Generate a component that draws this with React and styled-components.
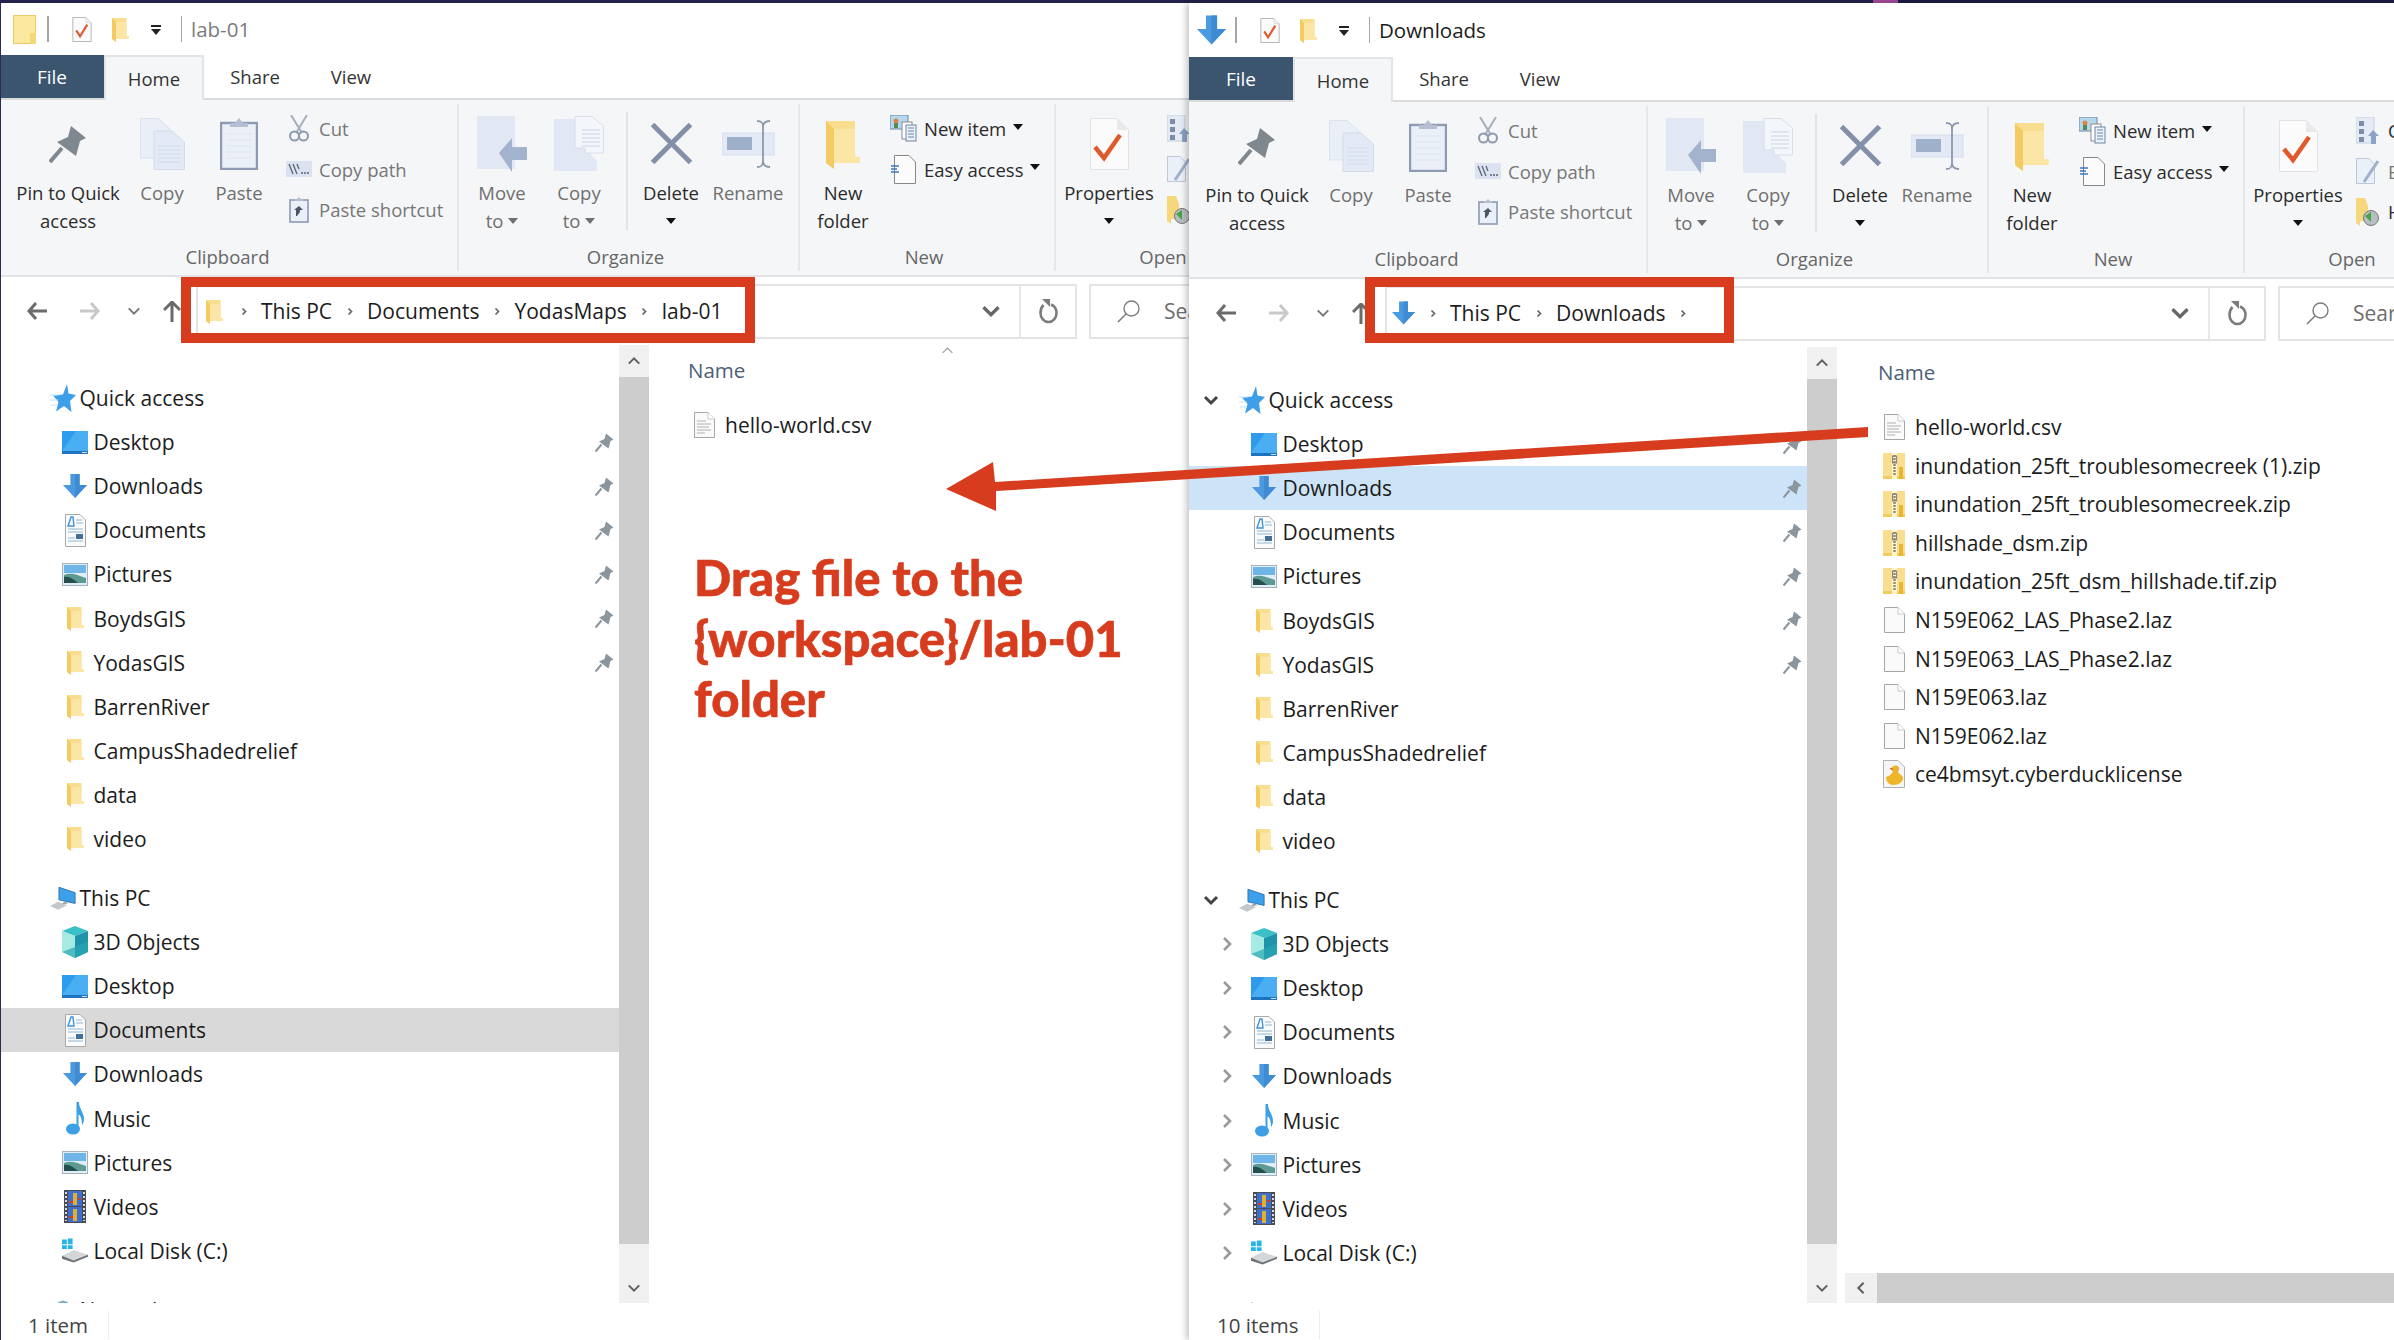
import React from "react";
import styled, { createGlobalStyle } from "styled-components";

const GlobalStyle = createGlobalStyle`
  html, body { margin: 0; padding: 0; background: #fff; }
  body { font-family: "Open Sans", "Noto Sans", sans-serif; color: #1c1c1c; }
  * { box-sizing: border-box; }
`;

const RED = "#d63c1d";

/* ---------- icons ---------- */
const Folder = ({ w = 17, h = 25 }) => (
  <svg width={w} height={h} viewBox="0 0 17 25">
    <path d="M0 1H14.5V19H17V22H4V25L0 22Z" fill="#f9de8f" />
    <path d="M4 5H14.5V19H17V22H4Z" fill="#fbe6a6" />
    <path d="M0 1L4 5V25L0 22Z" fill="#f3cb62" />
  </svg>
);
const TitleFolder = () => (
  <svg width="23" height="29" viewBox="0 0 23 29">
    <rect x="0.5" y="0.5" width="22" height="28" fill="#fcE89f" stroke="#eccb64" />
    <path d="M17 18H23V29H17Z" fill="#f5d777" />
  </svg>
);
const Arrow = ({ w = 26, h = 26 }) => (
  <svg width={w} height={h} viewBox="0 0 26 26">
    <path d="M8 0H18V12H26L13 26L0 12H8Z" fill="#4b9ae0" />
    <path d="M13 0H18V12H26L13 26Z" fill="#3f8cd4" />
  </svg>
);
const DesktopIcon = () => (
  <svg width="26" height="23" viewBox="0 0 26 23">
    <rect width="26" height="23" fill="#2f9bec" />
    <path d="M14 0H26V20H0Z" fill="#4aaef2" />
    <rect y="20" width="26" height="3" fill="#1f74bd" />
    <rect x="20" y="21" width="5" height="1" fill="#cfe6f7" />
  </svg>
);
const DocumentsIcon = () => (
  <svg width="21" height="33" viewBox="0 0 21 33">
    <path d="M.5.5H15L20.5 6V32.5H.5Z" fill="#fbfbfb" stroke="#a9a9a9" />
    <path d="M3 12L6 3H8L9 12Z" fill="none" stroke="#3f94dc" strokeWidth="1.4" />
    <path d="M11 6H17M11 9H18M3 15H18M3 18H18M3 27H18M3 24H10" stroke="#8cb6d8" />
    <rect x="11" y="20" width="7" height="5" fill="#41709a" />
  </svg>
);
const PicturesIcon = () => (
  <svg width="26" height="23" viewBox="0 0 26 23">
    <rect x=".5" y=".5" width="25" height="22" fill="#dfeefa" stroke="#a8b1ba" />
    <path d="M2 2H24V10H2Z" fill="#6fb5e8" />
    <path d="M2 12C9 9 15 12 24 15V20H2Z" fill="#5d9a93" />
    <path d="M2 14C8 13 12 17 16 20H2Z" fill="#244f4c" />
  </svg>
);
const Star = () => (
  <svg width="26" height="28" viewBox="0 0 26 28">
    <path d="M17 0L18.5 9.5L26 11L20 17L21.5 28L14 22L6 27.5L8.5 18L3 11.5L13 10.5Z" fill="#3d9eea" />
    <path d="M0 11H9M0 16H8M1 21H8" stroke="#c4e2f7" strokeWidth="1.2" />
  </svg>
);
const ThisPc = () => (
  <svg width="29" height="25" viewBox="0 0 29 25">
    <path d="M10 0L28 6V18L10 14Z" fill="#3ca0ea" stroke="#2b6fa8" />
    <path d="M17 15L20 18L13 19Z" fill="#9aa3ab" />
    <path d="M0 21L9 16L19 20L9 25Z" fill="#c4c8cc" />
  </svg>
);
const Cube = () => (
  <svg width="26" height="32" viewBox="0 0 26 32">
    <path d="M13 0L26 5L13 10L0 5Z" fill="#3cc0c8" />
    <path d="M0 5L13 10V32L0 26Z" fill="#a5ebe3" />
    <path d="M13 10L26 5V26L13 32Z" fill="#1f93aa" />
    <path d="M13 21L26 15V26L13 32L0 26Z" fill="#29a6b0" opacity=".7" />
  </svg>
);
const Music = () => (
  <svg width="18" height="33" viewBox="0 0 18 33">
    <ellipse cx="7" cy="27" rx="7" ry="5.5" fill="#3d9fe6" />
    <path d="M10.5 0H13C13 7 18 10 18 17C18 20 17 22 16 23C16 16 14 13 12.5 12.5V27H10.5Z" fill="#3d9fe6" />
  </svg>
);
const Videos = () => (
  <svg width="22" height="33" viewBox="0 0 22 33">
    <rect width="22" height="33" fill="#4a4a55" />
    <rect x="4" y="1" width="14" height="15" fill="#3d6fd0" />
    <rect x="4" y="17" width="14" height="15" fill="#3d6fd0" />
    <path d="M11 3V15M11 19V31" stroke="#e2b12c" strokeWidth="4" />
    <path d="M5 12H9M14 9H17M5 27H9" stroke="#c9402f" strokeWidth="2" />
    <path d="M2 2V31M20 2V31" stroke="#d8d8d8" strokeWidth="2" strokeDasharray="2 2" />
  </svg>
);
const Disk = () => (
  <svg width="27" height="25" viewBox="0 0 27 25">
    <path d="M0 7H5V11H0ZM6 7H11V11H6ZM0 1H5V6H0ZM6 0L11 0V6H6Z" fill="#28b4e6" />
    <path d="M0 18L12 12L27 17L12 24Z" fill="#d4d7da" />
    <path d="M0 18V21L12 25L27 19V17L12 23Z" fill="#6e7276" />
  </svg>
);
const Globe = () => (
  <svg width="18" height="20" viewBox="0 0 18 20">
    <circle cx="9" cy="10" r="9" fill="#57b0d8" />
    <path d="M3 6H14L9 0Z" fill="#8da7b4" />
  </svg>
);
const PinIcon = ({ w = 19, h = 23, c = "#8b959e" }) => (
  <svg width={w} height={h} viewBox="0 0 38 38">
    <path d="M1 37L13 23" stroke={c} strokeWidth="4" />
    <path d="M22 1L37 13L31 16L27 31L8 17L19 12Z" fill={c} />
  </svg>
);
const FilePage = ({ lines }) => (
  <svg width="21" height="26" viewBox="0 0 21 26">
    <path d="M.5.5H14L20.5 7V25.5H.5Z" fill="#fafafa" stroke="#a6a6a6" />
    <path d="M14 .5V7H20.5" fill="#fff" stroke="#c8c8c8" />
    {lines && <path d="M3 9H12M3 12H17M3 15H15M3 18H17M3 21H11" stroke="#c9c9c9" strokeWidth="1.4" />}
  </svg>
);
const ZipFile = () => (
  <svg width="22" height="26" viewBox="0 0 22 26">
    <rect width="22" height="26" fill="#f9de8f" />
    <rect y="23" width="22" height="3" fill="#f3cb62" />
    <rect x="9" width="5" height="26" fill="#fff4cf" />
    <path d="M11.5 2V22" stroke="#8a8a7a" strokeWidth="2.4" strokeDasharray="2 1" />
    <rect x="9.6" y="3" width="4" height="7" fill="none" stroke="#7e7e7e" />
    <rect x="16" y="14" width="4" height="12" fill="#e9b632" />
  </svg>
);
const DuckFile = () => (
  <svg width="22" height="28" viewBox="0 0 22 28">
    <path d="M.5.5H15L21.5 7V27.5H.5Z" fill="#f6f6f6" stroke="#b0b0b0" />
    <circle cx="12.5" cy="9" r="3.6" fill="#e9b32c" />
    <path d="M3 17C6 16 8 15 9.5 12H15C15.5 14 20 15 20 18C20 22 16 25 10.5 25C5.5 25 3 21 3 17Z" fill="#efb52a" />
    <path d="M6.5 8.5L9.5 7.5V10.5Z" fill="#d9651f" />
  </svg>
);
const Check = ({ w = 20, h = 25 }) => (
  <svg width={w} height={h} viewBox="0 0 40 52">
    <path d="M1 1H28L39 12V51H1Z" fill="#fbfbfc" stroke="#9c9c9c" strokeWidth="1.5" />
    <path d="M28 1V12H39" fill="#eee" stroke="#ccc" />
    <path d="M8 28L16 40L31 16" fill="none" stroke="#e0592a" strokeWidth="4.5" />
  </svg>
);
const Properties = () => (
  <svg width="39" height="52" viewBox="0 0 39 52">
    <path d="M.5.5H27L38.5 12V51.5H.5Z" fill="#fbfbfc" stroke="#e2e2e6" />
    <path d="M27 .5V12H38.5" fill="#e9e9ec" />
    <path d="M5 29L14 40L30 17" fill="none" stroke="#e0592a" strokeWidth="4.5" />
  </svg>
);
const CopyPages = () => (
  <svg width="45" height="52" viewBox="0 0 45 52">
    <path d="M.5.5H18L30 11V40H.5Z" fill="#e9eef7" stroke="#dbe2ee" />
    <path d="M14 13H32L44.5 24V51.5H14Z" fill="#e4eaf5" stroke="#d3dbe9" />
    <path d="M18 28H40M18 32H40M18 36H40M18 40H40M18 44H40" stroke="#d2daea" />
  </svg>
);
const Clipboard = () => (
  <svg width="38" height="52" viewBox="0 0 38 52">
    <rect x="1" y="5" width="36" height="46" fill="#eaeff8" stroke="#8d9ab2" strokeWidth="2.4" />
    <path d="M10 9V5H15L19 0L23 5H28V9Z" fill="#b5bfd1" />
    <path d="M6 16H32M6 22H32M6 28H32M6 34H32M6 40H32" stroke="#dfe6f2" />
  </svg>
);
const Scissors = () => (
  <svg width="20" height="27" viewBox="0 0 20 27">
    <path d="M2 0L13 18M18 0L7 18" stroke="#a4aebf" strokeWidth="2" />
    <circle cx="5.5" cy="21" r="4.5" fill="none" stroke="#8e9ab0" strokeWidth="2" />
    <circle cx="14.5" cy="21" r="4.5" fill="none" stroke="#8e9ab0" strokeWidth="2" />
  </svg>
);
const CopyPath = () => (
  <svg width="26" height="16" viewBox="0 0 26 16">
    <rect width="26" height="16" fill="#dbe3f1" />
    <path d="M3 3L7 13M7 3L11 13M11 3L13 8" stroke="#5a6474" strokeWidth="1.3" />
    <path d="M15 12H23" stroke="#5a6474" strokeDasharray="2 1" strokeWidth="1.5" />
  </svg>
);
const PasteShortcut = () => (
  <svg width="20" height="26" viewBox="0 0 20 26">
    <rect x="1" y="3" width="18" height="22" fill="#eaeff8" stroke="#8d9ab2" strokeWidth="1.6" />
    <path d="M6 4V2H8L10 0L12 2H14V4Z" fill="#b5bfd1" />
    <path d="M7 19V13H5L10 9L14 13H11V15L8 19Z" fill="#4a5568" />
  </svg>
);
const MoveTo = () => (
  <svg width="50" height="56" viewBox="0 0 50 56">
    <rect width="38" height="53" fill="#e1e8f3" />
    <path d="M22 37L35 22V31H50V44H35V56Z" fill="#a3b3cd" />
  </svg>
);
const CopyTo = () => (
  <svg width="50" height="56" viewBox="0 0 50 56">
    <path d="M0 3H37V39L43 45V55H0Z" fill="#e1e8f3" />
    <path d="M21 .5H38L49.5 10V37H31V32H21Z" fill="#f3f6fb" stroke="#d7deea" />
    <path d="M28 14H46M28 18H46M28 22H46M28 26H46M28 30H46" stroke="#ccd5e4" />
  </svg>
);
const DeleteX = () => (
  <svg width="43" height="43" viewBox="0 0 43 43">
    <path d="M2.5 2.5L40.5 40.5M40.5 2.5L2.5 40.5" stroke="#8490a9" strokeWidth="5" />
  </svg>
);
const Rename = () => (
  <svg width="53" height="48" viewBox="0 0 53 48">
    <rect y="13" width="52" height="22" fill="#e3eaf5" stroke="#d5dded" />
    <rect x="5" y="17" width="25" height="13" fill="#9fb0cb" />
    <path d="M35 1C40 1 41 3 41 7V41C41 45 40 47 35 47M48 1C43 1 41 3 41 7M41 41C41 45 43 47 48 47" fill="none" stroke="#8c98ae" strokeWidth="1.8" />
  </svg>
);
const NewItem = () => (
  <svg width="27" height="27" viewBox="0 0 27 27">
    <rect width="18" height="14" fill="#b6d8ef" stroke="#6a88a6" />
    <circle cx="6" cy="6" r="2.5" fill="#d88644" />
    <rect x="4" y="8" width="4" height="5" fill="#56895a" />
    <rect x="12" y="7" width="10" height="17" fill="#fff" stroke="#8a8a8a" />
    <rect x="16" y="10" width="10" height="16" fill="#eaf1fa" stroke="#6f86a4" />
    <path d="M18 13H24M18 16H24M18 19H24M18 22H24" stroke="#6f86a4" />
  </svg>
);
const EasyAccess = () => (
  <svg width="25" height="29" viewBox="0 0 25 29">
    <path d="M3.5.5H18L24.5 7V28.5H3.5Z" fill="#fbfbfc" stroke="#888" />
    <path d="M0 11H8M0 14H6M0 17H8" stroke="#3a78c4" strokeWidth="1.6" />
  </svg>
);
const OpenIcon = () => (
  <svg width="23" height="27" viewBox="0 0 23 27">
    <rect width="18" height="26" fill="#e5ebf5" stroke="#c5cfdf" />
    <rect x="3" y="4" width="5" height="5" fill="#7d8ca8" />
    <rect x="3" y="12" width="5" height="5" fill="#7d8ca8" />
    <rect x="3" y="20" width="5" height="5" fill="#7d8ca8" />
    <path d="M12 19L17 13L23 19H20V27H15V19Z" fill="#8ba2c4" />
  </svg>
);
const EditIcon = () => (
  <svg width="23" height="26" viewBox="0 0 23 26">
    <path d="M.5.5H13L18.5 6V25.5H.5Z" fill="#eaf0f8" stroke="#bcc7d8" />
    <path d="M8 24L22 3" stroke="#9fb0cb" strokeWidth="3" />
  </svg>
);
const HistoryIcon = () => (
  <svg width="23" height="28" viewBox="0 0 23 28">
    <path d="M0 0H9L12 8V23H4V28L0 25Z" fill="#f6d77b" />
    <circle cx="15" cy="20" r="7.5" fill="#b9bec4" stroke="#777" />
    <path d="M9 18L15 14V24Z" fill="#46a546" />
  </svg>
);
const Chev = ({ dir = "down", size = 16, c = "#555", sw = 2.4 }) => {
  const d = {
    down: "M2 5L8 11L14 5",
    up: "M2 11L8 5L14 11",
    right: "M5 2L11 8L5 14",
    left: "M11 2L5 8L11 14",
  }[dir];
  return (
    <svg width={size} height={size} viewBox="0 0 16 16">
      <path d={d} fill="none" stroke={c} strokeWidth={sw} />
    </svg>
  );
};
const LeftArrow = ({ c, flip }) => (
  <svg width="20" height="18" viewBox="0 0 20 18" style={flip ? { transform: "scaleX(-1)" } : undefined}>
    <path d="M9 1L2 9L9 17M2 9H20" fill="none" stroke={c} strokeWidth="3" />
  </svg>
);
const UpArrow = () => (
  <svg width="18" height="21" viewBox="0 0 18 21">
    <path d="M1 9L9 1L17 9M9 1V21" fill="none" stroke="#6b6b6b" strokeWidth="3" />
  </svg>
);
const Refresh = () => (
  <svg width="19" height="26" viewBox="0 0 19 26">
    <path d="M4.5 7C2.5 9 1.5 12 1.5 15C1.5 20 5 24 9.5 24C14 24 17.5 20 17.5 15C17.5 11 15.5 8 12 6.5" fill="none" stroke="#7c7c7c" strokeWidth="2.6" />
    <path d="M3 1L11 1V9Z" fill="#7c7c7c" />
  </svg>
);
const SearchGlass = () => (
  <svg width="23" height="23" viewBox="0 0 23 23">
    <circle cx="14.5" cy="8.5" r="7.5" fill="none" stroke="#7d7d7d" strokeWidth="1.4" />
    <path d="M9 14L1 22" stroke="#7d7d7d" strokeWidth="1.6" />
  </svg>
);

/* ---------- layout ---------- */
const Desktop = styled.div`
  position: relative;
  width: 2394px;
  height: 1340px;
  padding-top: 3px;
  display: flex;
  overflow: hidden;
  background: linear-gradient(90deg, #22224a 0 1873px, #a04a9c 1873px 1898px, #1c1c44 1898px);
`;
const Win = styled.section`
  position: relative;
  flex: none;
  width: ${(p) => p.$width}px;
  height: 1337px;
  display: flex;
  flex-direction: column;
  overflow: hidden;
  background: #fff;
  box-shadow: ${(p) => (p.$front ? "-3px 0 6px rgba(0,0,0,.22)" : "none")};
  z-index: ${(p) => (p.$front ? 2 : 1)};
`;
const EdgeLine = styled.div`
  position: absolute;
  left: 0;
  top: 0;
  bottom: 0;
  width: 1px;
  background: #2a2a55;
  z-index: 3;
`;
const TitleBar = styled.div`
  flex: none;
  height: ${(p) => p.$h}px;
  display: flex;
  align-items: center;
  padding-left: ${(p) => p.$pad}px;
`;
const Qat = styled.span`
  display: flex;
  margin-left: ${(p) => p.$ml}px;
`;
const QatSep = styled.span`
  width: 1.5px;
  height: 26px;
  margin-left: ${(p) => p.$ml}px;
  background: #a6a6a6;
`;
const QatDrop = styled.span`
  margin-left: ${(p) => p.$ml}px;
  width: 10px;
  height: 9px;
  border-top: 2px solid #222;
  position: relative;
  &::after {
    content: "";
    position: absolute;
    top: 2px;
    left: 0;
    border-left: 5px solid transparent;
    border-right: 5px solid transparent;
    border-top: 6px solid #222;
  }
`;
const Title = styled.span`
  margin-left: 9px;
  font-size: 20.5px;
  color: ${(p) => (p.$dim ? "#7b7b7b" : "#1c1c1c")};
`;
const TabRow = styled.div`
  flex: none;
  height: 45px;
  display: flex;
  border-bottom: 2px solid #dadbdc;
`;
const FileTab = styled.div`
  width: 104px;
  height: 43px;
  background: #3b556f;
  color: #fff;
  font-size: 19px;
  display: flex;
  align-items: center;
  justify-content: center;
`;
const Tab = styled.div`
  width: ${(p) => p.$w}px;
  height: ${(p) => (p.$active ? 45 : 43)}px;
  font-size: 18.5px;
  display: flex;
  align-items: center;
  justify-content: center;
  color: #333;
  ${(p) => p.$active && "background:#f5f6f7;border:2px solid #e3e4e6;border-bottom:0;"}
`;
const Ribbon = styled.div`
  flex: none;
  height: 177px;
  padding-top: 4px;
  display: flex;
  background: #f5f6f8;
  border-bottom: 2px solid #e2e3e5;
  font-size: 18.5px;
`;
const Group = styled.div`
  flex: none;
  width: ${(p) => p.$w}px;
  height: 167px;
  display: flex;
  flex-direction: column;
  border-right: 2px solid #e6e7e9;
`;
const GroupBody = styled.div`
  height: 139px;
  display: flex;
  padding-left: ${(p) => p.$pad || 0}px;
`;
const GroupLabel = styled.div`
  height: 28px;
  line-height: 28px;
  text-align: center;
  color: #666;
  white-space: nowrap;
  padding-right: ${(p) => p.$shift || 0}px;
`;
const LargeBtn = styled.div`
  flex: none;
  width: ${(p) => p.$w}px;
  display: flex;
  flex-direction: column;
  align-items: center;
  padding-top: 4px;
  color: ${(p) => (p.$dim ? "#6f6f6f" : "#2b2b2b")};
`;
const LargeIcon = styled.div`
  height: 71px;
  display: flex;
  align-items: center;
  justify-content: center;
`;
const LargeLabel = styled.div`
  line-height: 28px;
  text-align: center;
  white-space: nowrap;
`;
const Caret = styled.span`
  display: inline-block;
  vertical-align: middle;
  margin-left: ${(p) => p.$ml ?? 5}px;
  margin-top: -4px;
  border-left: 5px solid transparent;
  border-right: 5px solid transparent;
  border-top: 6px solid ${(p) => (p.$dim ? "#6f6f6f" : "#111")};
`;
const InnerSep = styled.div`
  flex: none;
  width: 2px;
  height: 118px;
  margin: 8px 2px 0 13px;
  background: #e2e3e6;
`;
const SmallCol = styled.div`
  flex: none;
  margin-left: ${(p) => p.$ml}px;
  padding-top: 4.5px;
  white-space: nowrap;
`;
const SmallBtn = styled.div`
  height: 40.5px;
  display: flex;
  align-items: center;
  color: ${(p) => (p.$dim ? "#777" : "#2b2b2b")};
`;
const SmallIcon = styled.span`
  flex: none;
  width: 27px;
  margin-right: 7px;
  display: flex;
  justify-content: center;
`;
const AddressRow = styled.div`
  flex: none;
  height: 68px;
  display: flex;
  align-items: center;
`;
const NavBtn = styled.span`
  flex: none;
  display: flex;
  margin-left: ${(p) => p.$ml}px;
`;
const AddressBar = styled.div`
  flex: none;
  margin-left: 15px;
  width: 881px;
  height: 55px;
  display: flex;
  align-items: center;
  border: 2px solid #e4e4e4;
  font-size: 21px;
`;
const CrumbIcon = styled.span`
  flex: none;
  width: 24px;
  margin-left: 4px;
  display: flex;
  justify-content: center;
`;
const Crumb = styled.span`
  white-space: nowrap;
`;
const CrumbChev = styled.span`
  flex: none;
  display: flex;
  width: 8px;
  margin: 0 13.5px;
  justify-content: center;
`;
const BarEnd = styled.div`
  margin-left: auto;
  display: flex;
  align-items: center;
  height: 100%;
`;
const BarBtn = styled.span`
  display: flex;
  align-items: center;
  justify-content: center;
  height: 100%;
  width: ${(p) => p.$w}px;
  ${(p) => p.$line && "border-left:2px solid #e8e8e8;"}
`;
const SearchBox = styled.div`
  flex: none;
  margin-left: 12px;
  width: 400px;
  height: 55px;
  padding-left: 26px;
  display: flex;
  align-items: center;
  gap: 24px;
  border: 2px solid #e4e4e4;
  font-size: 21px;
  color: #6d6d6d;
  white-space: nowrap;
`;
const Body = styled.div`
  flex: 1;
  min-height: 0;
  display: grid;
  grid-template-columns: ${(p) => p.$nav}px 30px 1fr;
`;
const NavPane = styled.nav`
  overflow: hidden;
  padding-top: 31px;
  font-size: 21px;
`;
const NavGroup = styled.div`
  margin-bottom: 15px;
`;
const NavRow = styled.div`
  height: 44.1px;
  display: flex;
  align-items: center;
  white-space: nowrap;
  padding-left: ${(p) => (p.$child ? 30 : 14)}px;
  background: ${(p) => p.$selected || "transparent"};
`;
const Twisty = styled.span`
  flex: none;
  width: 16px;
  display: flex;
  justify-content: center;
  margin-right: ${(p) => (p.$child ? 16 : 20)}px;
`;
const NavIcon = styled.span`
  flex: none;
  width: 26px;
  display: flex;
  justify-content: center;
`;
const NavLabel = styled.span`
  margin-left: ${(p) => (p.$child ? 5.5 : 3.5)}px;
`;
const NavPin = styled.span`
  margin-left: auto;
  margin-right: 5px;
  display: flex;
`;
const VScroll = styled.div`
  display: flex;
  flex-direction: column;
`;
const ScrollEnd = styled.div`
  flex: none;
  height: ${(p) => p.$h}px;
  background: #f0f0f0;
  display: flex;
  justify-content: center;
  align-items: ${(p) => (p.$down ? "flex-end" : "center")};
  padding-bottom: ${(p) => (p.$down ? 8 : 0)}px;
`;
const ScrollThumb = styled.div`
  flex: 1;
  background: #cdcdcd;
`;
const Content = styled.div`
  position: relative;
  min-width: 0;
  display: flex;
  flex-direction: column;
  padding-top: 0;
`;
const FileList = styled.div`
  flex: 1;
  padding-left: ${(p) => p.$pad}px;
  font-size: 21px;
`;
const NameHeader = styled.div`
  height: 50px;
  margin-bottom: 10.7px;
  display: flex;
  align-items: center;
  font-size: 20.5px;
  color: #4c607a;
`;
const SortCaret = styled.span`
  position: absolute;
  left: ${(p) => p.$left}px;
  top: -1px;
  display: flex;
`;
const FileRow = styled.div`
  height: 38.6px;
  display: flex;
  align-items: center;
  white-space: nowrap;
`;
const FileIcon = styled.span`
  flex: none;
  width: 22px;
  margin: 0 10px 0 5px;
  display: flex;
  justify-content: center;
`;
const HScroll = styled.div`
  flex: none;
  height: 30px;
  margin-left: 8px;
  display: flex;
`;
const HScrollBtn = styled.div`
  flex: none;
  width: 32px;
  background: #f0f0f0;
  display: flex;
  align-items: center;
  justify-content: center;
`;
const StatusBar = styled.footer`
  flex: none;
  height: 37px;
  padding: 7px 0 0 28px;
  font-size: 20.5px;
  color: #444;
  display: flex;
  align-items: center;
`;
const StatusText = styled.span`
  padding-right: 20px;
  border-right: 1px solid #ececec;
`;
const RedBox = styled.div`
  position: absolute;
  left: ${(p) => p.$left}px;
  top: 277px;
  width: ${(p) => p.$w}px;
  height: 66px;
  border: 10px solid ${RED};
  z-index: 5;
`;
const ArrowLayer = styled.svg`
  position: absolute;
  left: 0;
  top: 0;
  z-index: 6;
  pointer-events: none;
`;
const Note = styled.div`
  position: absolute;
  left: 694px;
  top: 547px;
  z-index: 6;
  font-family: Lato, "Open Sans", sans-serif;
  font-weight: 900;
  font-size: 49px;
  line-height: 60.5px;
  -webkit-text-stroke: 0.6px ${RED};
  color: ${RED};
  white-space: nowrap;
`;

/* ---------- data ---------- */
const ICONS = {
  desktop: <DesktopIcon />,
  down: <Arrow w={24} h={24} />,
  docs: <DocumentsIcon />,
  pics: <PicturesIcon />,
  folder: <Folder />,
  cube: <Cube />,
  music: <Music />,
  videos: <Videos />,
  disk: <Disk />,
};
const QUICK = [
  ["Desktop", "desktop", true],
  ["Downloads", "down", true],
  ["Documents", "docs", true],
  ["Pictures", "pics", true],
  ["BoydsGIS", "folder", true],
  ["YodasGIS", "folder", true],
  ["BarrenRiver", "folder"],
  ["CampusShadedrelief", "folder"],
  ["data", "folder"],
  ["video", "folder"],
];
const PC = [
  ["3D Objects", "cube"],
  ["Desktop", "desktop"],
  ["Documents", "docs"],
  ["Downloads", "down"],
  ["Music", "music"],
  ["Pictures", "pics"],
  ["Videos", "videos"],
  ["Local Disk (C:)", "disk"],
];
const DOWNLOADS = [
  ["hello-world.csv", <FilePage lines />],
  ["inundation_25ft_troublesomecreek (1).zip", <ZipFile />],
  ["inundation_25ft_troublesomecreek.zip", <ZipFile />],
  ["hillshade_dsm.zip", <ZipFile />],
  ["inundation_25ft_dsm_hillshade.tif.zip", <ZipFile />],
  ["N159E062_LAS_Phase2.laz", <FilePage />],
  ["N159E063_LAS_Phase2.laz", <FilePage />],
  ["N159E063.laz", <FilePage />],
  ["N159E062.laz", <FilePage />],
  ["ce4bmsyt.cyberducklicense", <DuckFile />],
];

/* ---------- parts ---------- */
function RibbonBar() {
  return (
    <Ribbon>
      <Group $w={459}>
        <GroupBody $pad={10}>
          <LargeBtn $w={116}>
            <LargeIcon><PinIcon w={38} h={38} c="#7f888e" /></LargeIcon>
            <LargeLabel>Pin to Quick<br />access</LargeLabel>
          </LargeBtn>
          <LargeBtn $w={72} $dim>
            <LargeIcon><CopyPages /></LargeIcon>
            <LargeLabel>Copy</LargeLabel>
          </LargeBtn>
          <LargeBtn $w={82} $dim>
            <LargeIcon><Clipboard /></LargeIcon>
            <LargeLabel>Paste</LargeLabel>
          </LargeBtn>
          <SmallCol $ml={5}>
            <SmallBtn $dim><SmallIcon><Scissors /></SmallIcon>Cut</SmallBtn>
            <SmallBtn $dim><SmallIcon><CopyPath /></SmallIcon>Copy path</SmallBtn>
            <SmallBtn $dim><SmallIcon><PasteShortcut /></SmallIcon>Paste shortcut</SmallBtn>
          </SmallCol>
        </GroupBody>
        <GroupLabel $shift={2}>Clipboard</GroupLabel>
      </Group>
      <Group $w={341}>
        <GroupBody>
          <LargeBtn $w={86} $dim>
            <LargeIcon><MoveTo /></LargeIcon>
            <LargeLabel>Move<br />to<Caret $dim /></LargeLabel>
          </LargeBtn>
          <LargeBtn $w={68} $dim>
            <LargeIcon><CopyTo /></LargeIcon>
            <LargeLabel>Copy<br />to<Caret $dim /></LargeLabel>
          </LargeBtn>
          <InnerSep />
          <LargeBtn $w={82}>
            <LargeIcon><DeleteX /></LargeIcon>
            <LargeLabel>Delete<br /><Caret $ml={0} /></LargeLabel>
          </LargeBtn>
          <LargeBtn $w={72} $dim>
            <LargeIcon><Rename /></LargeIcon>
            <LargeLabel>Rename</LargeLabel>
          </LargeBtn>
        </GroupBody>
        <GroupLabel $shift={6}>Organize</GroupLabel>
      </Group>
      <Group $w={256}>
        <GroupBody>
          <LargeBtn $w={86}>
            <LargeIcon><Folder w={36} h={50} /></LargeIcon>
            <LargeLabel>New<br />folder</LargeLabel>
          </LargeBtn>
          <SmallCol $ml={4}>
            <SmallBtn><SmallIcon><NewItem /></SmallIcon>New item<Caret $ml={7} /></SmallBtn>
            <SmallBtn><SmallIcon><EasyAccess /></SmallIcon>Easy access<Caret $ml={7} /></SmallBtn>
          </SmallCol>
        </GroupBody>
        <GroupLabel $shift={6}>New</GroupLabel>
      </Group>
      <Group $w={300}>
        <GroupBody>
          <LargeBtn $w={106}>
            <LargeIcon><Properties /></LargeIcon>
            <LargeLabel>Properties<br /><Caret $ml={0} /></LargeLabel>
          </LargeBtn>
          <SmallCol $ml={3}>
            <SmallBtn><SmallIcon><OpenIcon /></SmallIcon>Open<Caret $ml={7} /></SmallBtn>
            <SmallBtn $dim><SmallIcon><EditIcon /></SmallIcon>Edit</SmallBtn>
            <SmallBtn><SmallIcon><HistoryIcon /></SmallIcon>History</SmallBtn>
          </SmallCol>
        </GroupBody>
        <GroupLabel $shift={84}>Open</GroupLabel>
      </Group>
    </Ribbon>
  );
}

function NavTree({ expandable, selected, selectedColor }) {
  const row = (label, icon, pinned, section) => (
    <NavRow key={section + label} $child $selected={selected === section + label ? selectedColor : ""}>
      <Twisty $child>
        {expandable && section === "pc" && <Chev dir="right" size={18} c="#9a9a9a" sw={2.6} />}
      </Twisty>
      <NavIcon>{ICONS[icon]}</NavIcon>
      <NavLabel $child>{label}</NavLabel>
      {pinned && <NavPin><PinIcon /></NavPin>}
    </NavRow>
  );
  const head = (label, icon) => (
    <NavRow>
      <Twisty>{expandable && <Chev size={18} c="#444" sw={3} />}</Twisty>
      <NavIcon>{icon}</NavIcon>
      <NavLabel>{label}</NavLabel>
    </NavRow>
  );
  return (
    <NavPane>
      <NavGroup>
        {head("Quick access", <Star />)}
        {QUICK.map(([l, i, p]) => row(l, i, p, "quick"))}
      </NavGroup>
      <NavGroup>
        {head("This PC", <ThisPc />)}
        {PC.map(([l, i]) => row(l, i, false, "pc"))}
      </NavGroup>
      <NavGroup>
        {head("Network", <Globe />)}
      </NavGroup>
    </NavPane>
  );
}

function Explorer({ width, front, titleHeight, titlePad, windowIcon, title, crumbIcon, crumbs, trailing,
  navWidth, selected, selectedColor, expandable, listPad, files, sortLeft, status }) {
  return (
    <Win $width={width} $front={front}>
      {!front && <EdgeLine />}
      <TitleBar $h={titleHeight} $pad={titlePad}>
        {windowIcon}
        <QatSep $ml={front ? 9 : 11} />
        <Qat $ml={23}><Check /></Qat>
        <Qat $ml={20}><Folder /></Qat>
        <QatDrop $ml={22} />
        <QatSep $ml={20} />
        <Title $dim={!front}>{title}</Title>
      </TitleBar>
      <TabRow>
        <FileTab>File</FileTab>
        <Tab $w={100} $active>Home</Tab>
        <Tab $w={102}>Share</Tab>
        <Tab $w={90}>View</Tab>
      </TabRow>
      <RibbonBar />
      <AddressRow>
        <NavBtn $ml={27}><LeftArrow c="#6b6b6b" /></NavBtn>
        <NavBtn $ml={33}><LeftArrow c="#c9c9c9" flip /></NavBtn>
        <NavBtn $ml={27}><Chev size={14} c="#777" sw={2.2} /></NavBtn>
        <NavBtn $ml={22}><UpArrow /></NavBtn>
        <AddressBar>
          <CrumbIcon>{crumbIcon}</CrumbIcon>
          <CrumbChev><Chev dir="right" size={19} c="#666" sw={3.4} /></CrumbChev>
          {crumbs.map((c, i) => (
            <React.Fragment key={c}>
              <Crumb>{c}</Crumb>
              {(i < crumbs.length - 1 || trailing) && (
                <CrumbChev><Chev dir="right" size={19} c="#666" sw={3.4} /></CrumbChev>
              )}
            </React.Fragment>
          ))}
          <BarEnd>
            <BarBtn $w={56}><Chev size={20} c="#666" sw={2.6} /></BarBtn>
            <BarBtn $w={56} $line><Refresh /></BarBtn>
          </BarEnd>
        </AddressBar>
        <SearchBox><SearchGlass />Search {title}</SearchBox>
      </AddressRow>
      <Body $nav={navWidth}>
        <NavTree expandable={expandable} selected={selected} selectedColor={selectedColor} />
        <VScroll>
          <ScrollEnd $h={32}><Chev dir="up" size={14} c="#606060" /></ScrollEnd>
          <ScrollThumb />
          <ScrollEnd $h={59} $down><Chev size={14} c="#606060" /></ScrollEnd>
        </VScroll>
        <Content>
          {sortLeft && <SortCaret $left={sortLeft}><Chev dir="up" size={13} c="#9a9a9a" sw={1.4} /></SortCaret>}
          <FileList $pad={listPad}>
            <NameHeader>Name</NameHeader>
            {files.map(([name, icon]) => (
              <FileRow key={name}>
                <FileIcon>{icon}</FileIcon>
                {name}
              </FileRow>
            ))}
          </FileList>
          {front && (
            <HScroll>
              <HScrollBtn><Chev dir="left" size={14} c="#606060" /></HScrollBtn>
              <ScrollThumb />
            </HScroll>
          )}
        </Content>
      </Body>
      <StatusBar><StatusText>{status}</StatusText></StatusBar>
    </Win>
  );
}

export default function App() {
  return (
    <Desktop>
      <GlobalStyle />
      <Explorer
        width={1189}
        titleHeight={52}
        titlePad={13}
        windowIcon={<TitleFolder />}
        title="lab-01"
        crumbIcon={<Folder />}
        crumbs={["This PC", "Documents", "YodasMaps", "lab-01"]}
        navWidth={619}
        selected="pcDocuments"
        selectedColor="#d9d9d9"
        listPad={39}
        files={[["hello-world.csv", <FilePage lines />]]}
        sortLeft={292}
        status="1 item"
      />
      <Explorer
        width={1205}
        front
        titleHeight={54}
        titlePad={8}
        windowIcon={<Arrow w={29} h={30} />}
        title="Downloads"
        crumbIcon={<Arrow w={23} h={24} />}
        crumbs={["This PC", "Downloads"]}
        trailing
        navWidth={618}
        selected="quickDownloads"
        selectedColor="#cde4f8"
        expandable
        listPad={41}
        files={DOWNLOADS}
        status="10 items"
      />
      <RedBox $left={181} $w={574} />
      <RedBox $left={1365} $w={369} />
      <ArrowLayer width="2394" height="1340" viewBox="0 0 2394 1340">
        <path d="M946 489L993 462L995 482L1868 427L1868 437L996 491L996 511Z" fill={RED} />
      </ArrowLayer>
      <Note>Drag file to the<br />{"{workspace}/lab-01"}<br />folder</Note>
    </Desktop>
  );
}
